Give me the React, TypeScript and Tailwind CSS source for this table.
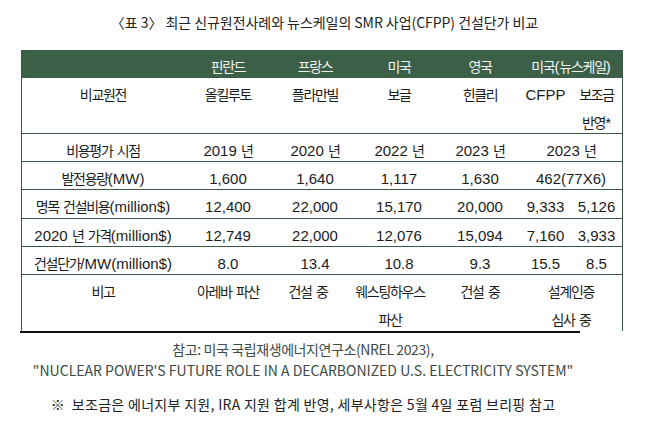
import React from 'react'

// Hangul runs are set a little narrower than the Latin text around them
function K({ t, k = 'text-[14px] tracking-[-1.3px]' }: { t: string; k?: string }) {
  const parts = t.split(/([가-힣]+)/)
  return (
    <span>
      {parts.map((s, i) =>
        /[가-힣]/.test(s) ? (
          <span key={i} className={k}>
            {s}
          </span>
        ) : (
          <React.Fragment key={i}>{s}</React.Fragment>
        ),
      )}
    </span>
  )
}

type Cell = { lines: string[]; span?: 2; shift?: string }

const GRID = 'grid grid-cols-[162px_88px_86px_82px_80px_51px_51px]'

const HEADER: Cell[] = [
  { lines: [''] },
  { lines: ['핀란드'] },
  { lines: ['프랑스'] },
  { lines: ['미국'] },
  { lines: ['영국'] },
  { lines: ['미국(뉴스케일)'], span: 2 },
]

const ROWS: { h: string; cells: Cell[] }[] = [
  {
    h: 'h-[56px]',
    cells: [
      { lines: ['비교원전'] },
      { lines: ['올킬루토'] },
      { lines: ['플라만빌'] },
      { lines: ['보글'] },
      { lines: ['힌클리'] },
      { lines: ['CFPP'] },
      { lines: ['보조금', '반영*'] },
    ],
  },
  {
    h: 'h-[28px]',
    cells: [
      { lines: ['비용평가 시점'] },
      { lines: ['2019 년'] },
      { lines: ['2020 년'] },
      { lines: ['2022 년'] },
      { lines: ['2023 년'] },
      { lines: ['2023 년'], span: 2 },
    ],
  },
  {
    h: 'h-[28px]',
    cells: [
      { lines: ['발전용량(MW)'] },
      { lines: ['1,600'] },
      { lines: ['1,640'] },
      { lines: ['1,117'] },
      { lines: ['1,630'] },
      { lines: ['462(77X6)'], span: 2 },
    ],
  },
  {
    h: 'h-[29px]',
    cells: [
      { lines: ['명목 건설비용(million$)'] },
      { lines: ['12,400'] },
      { lines: ['22,000'] },
      { lines: ['15,170'] },
      { lines: ['20,000'] },
      { lines: ['9,333'] },
      { lines: ['5,126'] },
    ],
  },
  {
    h: 'h-[28px]',
    cells: [
      { lines: ['2020 년 가격(million$)'] },
      { lines: ['12,749'] },
      { lines: ['22,000'] },
      { lines: ['12,076'] },
      { lines: ['15,094'] },
      { lines: ['7,160'] },
      { lines: ['3,933'] },
    ],
  },
  {
    h: 'h-[28px]',
    cells: [
      { lines: ['건설단가/MW(million$)'] },
      { lines: ['8.0'] },
      { lines: ['13.4'] },
      { lines: ['10.8'] },
      { lines: ['9.3'] },
      { lines: ['15.5'] },
      { lines: ['8.5'] },
    ],
  },
  {
    h: 'h-[56px]',
    cells: [
      { lines: ['비고'] },
      { lines: ['아레바 파산'] },
      { lines: ['건설 중'], shift: 'pr-[14px]' },
      { lines: ['웨스팅하우스', '파산'], shift: 'pr-[18px]' },
      { lines: ['건설 중'] },
      { lines: ['설계인증', '심사 중'], span: 2 },
    ],
  },
]

function CellView({ cell }: { cell: Cell }) {
  return (
    <div className={`flex flex-col items-center ${cell.span === 2 ? 'col-span-2' : ''} ${cell.shift ?? ''}`}>
      {cell.lines.map((l, i) => (
        <div key={i} className="h-[28px] pt-[5px] flex items-center justify-center whitespace-pre">
          <K t={l} />
        </div>
      ))}
    </div>
  )
}

export default function App() {
  return (
    <div className="w-[649px] h-[425px] bg-white text-[#1c1c1c] font-['Liberation_Sans','Noto_Sans_CJK_KR',sans-serif] text-[15px] leading-none overflow-hidden">
      {/* Title */}
      <div className="h-[50px] pb-[6px] flex items-center justify-center text-[14px] tracking-[-0.05px] text-[#222]">
        <span className="font-['Noto_Sans_CJK_KR',sans-serif]">〈표 3〉 최근 신규원전사례와 뉴스케일의 SMR 사업(CFPP) 건설단가 비교</span>
      </div>

      {/* Table */}
      <div className="ml-[21px] w-[602px] border-x border-[#3b5a45]">
        <div className={`${GRID} h-[28px] bg-[#3b5f47] text-[#f2f2f2]`}>
          {HEADER.map((c, i) => (
            <CellView key={i} cell={c} />
          ))}
        </div>
        {ROWS.map((r, ri) => (
          <div
            key={ri}
            className={`${GRID} ${r.h} ${ri < ROWS.length - 1 ? 'border-b border-[#3b5a45]' : ''}`}
          >
            {r.cells.map((c, i) => (
              <CellView key={i} cell={c} />
            ))}
          </div>
        ))}
      </div>
      <div className="ml-[20px] w-[560px] h-[2px] bg-[#111]" />

      {/* Notes */}
      <div className="mt-[6px] pr-[43px] text-center text-[#3d4a45] text-[14px] leading-[21px] font-['Noto_Sans_CJK_KR',sans-serif]">
        <div className="tracking-[-0.4px]">참고: 미국 국립재생에너지연구소(NREL 2023),</div>
        <div>"NUCLEAR POWER'S FUTURE ROLE IN A DECARBONIZED U.S. ELECTRICITY SYSTEM"</div>
      </div>
      <div className="mt-[13px] pr-[43px] text-center text-[#222] text-[14px] leading-[21px] font-['Noto_Sans_CJK_KR',sans-serif] tracking-[0.3px]">
        ※&nbsp;&nbsp;보조금은 에너지부 지원, IRA 지원 합계 반영, 세부사항은 5월 4일 포럼 브리핑 참고
      </div>
    </div>
  )
}
